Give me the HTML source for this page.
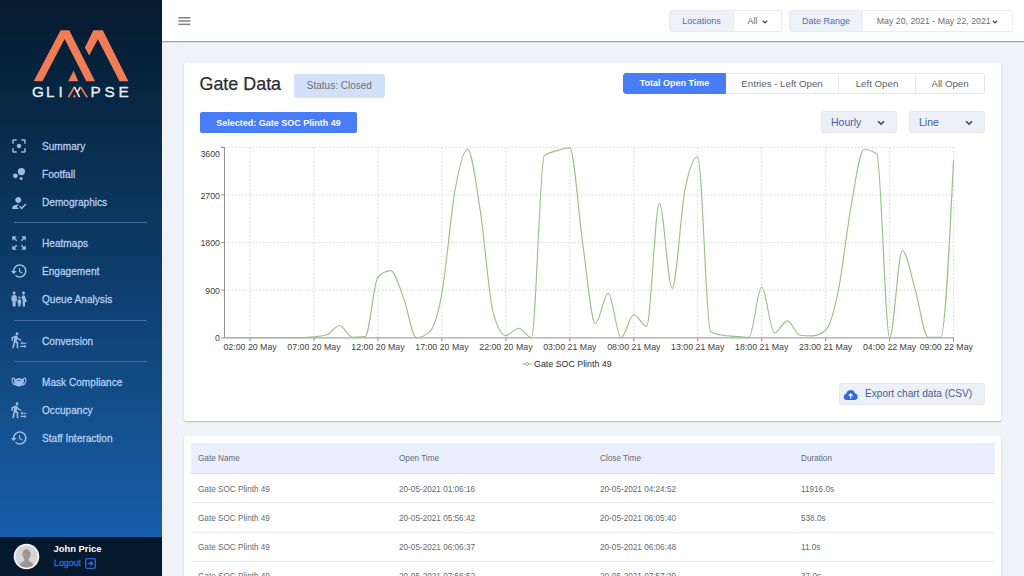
<!DOCTYPE html>
<html lang="en">
<head>
<meta charset="utf-8">
<title>Glimpse - Gate Data</title>
<style>
*{box-sizing:border-box;margin:0;padding:0}
html,body{width:1024px;height:576px;overflow:hidden}
body{font-family:"Liberation Sans",Arial,sans-serif;background:#f1f2f8;color:#333;position:relative}
.abs{position:absolute}
#sidebar{position:absolute;z-index:2;left:0;top:0;width:161.5px;height:576px;background:linear-gradient(180deg,#051b30 0px,#072947 115px,#0b365d 210px,#0e4174 310px,#14518e 425px,#175ca8 525px,#185eab 540px)}
#userstrip{position:absolute;left:0;top:536.5px;width:161.5px;height:40px;background:#04192e}
.nav{position:absolute;left:42px;color:#b4cdf0;font-size:10.800px;transform:scaleX(0.936);transform-origin:0 50%;-webkit-text-stroke:0.300px #b4cdf0;line-height:14px;white-space:nowrap;font-weight:400}
.navic{position:absolute;left:10px;width:18px;height:18px;fill:#9fbbe2}
.divider{position:absolute;left:14px;width:133px;height:1px;background:#3d6aa3}
#topbar{position:absolute;left:160px;top:0;width:864px;height:43px;background:#fff;border-bottom:1px solid #d9dadf}
#topbar:after{content:"";position:absolute;left:0;right:0;top:41px;height:1px;background:#a9aaaf}
.card{position:absolute;background:#fff;border-radius:2px;box-shadow:0 1px 1.5px rgba(30,30,40,.26)}
.pill{position:absolute;top:10px;height:21.500px;font-size:9px;line-height:21px;text-align:center;white-space:nowrap}
.pill.lab{background:#eef1f8;border:1px solid #e9ecf3;color:#4a6fb5;border-radius:3px 0 0 3px}
.pill.val{background:#fff;border:1px solid #eaecf2;border-left:none;color:#6a6d75;border-radius:0 3px 3px 0}
.tab{position:absolute;top:73px;height:21px;font-size:9.700px;line-height:19.500px;text-align:center;color:#5d6068;background:#fff;border:1px solid #e6e8ee;border-left:none;white-space:nowrap}
.tab.act{background:#497df8;color:#fff;font-weight:700;border-color:#497df8;border-radius:3px 0 0 3px;font-size:9px}
.sel{position:absolute;top:111px;height:22px;background:#edf0f7;border:1px solid #e4e7ef;border-radius:3px;color:#3f5fa3;font-size:10.5px;line-height:20px;padding-left:9px}
.sel svg{position:absolute;right:11.500px;top:8px}
.th,.td{position:absolute;font-size:8.200px;color:#666a72;white-space:nowrap;line-height:10px}
.rowline{position:absolute;left:190.500px;width:804.200px;height:1px;background:#e6e8ee}
svg text{font-family:"Liberation Sans",Arial,sans-serif}
</style>
</head>
<body>

<!-- SIDEBAR -->
<div id="sidebar">
  <!-- logo -->
  <svg class="abs" style="left:0;top:0" width="161" height="110" viewBox="0 0 161 110" role="img" aria-label="GLIMPSE"><title>GLIMPSE</title>
    <g fill="#f47c54">
      <polygon points="33.7,81.3 60.6,30.2 69.2,30.2 95.1,81.3 86.3,81.3 64.6,39 42.5,81.3"/>
      <polygon points="84.9,47.4 93.4,30.2 102.8,30.2 128.4,81.3 119.5,81.3 97.9,39.3 89.2,55.6"/>
      <polygon points="68.1,81.3 73.7,70.4 78.2,81.3"/>
    </g>
    <text y="97.2" x="32.0 45.9 58.6" font-size="15.3" fill="#e6ebf3" stroke="#e6ebf3" stroke-width="0.35">GLI</text>
    <text y="97.2" x="90.6 104.6 118.5" font-size="15.3" fill="#e6ebf3" stroke="#e6ebf3" stroke-width="0.35">PSE</text>
    <g fill="none" stroke-width="1.7" stroke-linecap="butt">
      <path d="M68.4,97.2 L74.4,86.9" stroke="#f47c54"/>
      <path d="M74.4,86.9 L79.6,97.2 M77.0,92.8 L80.5,86.9" stroke="#f0d9d0"/>
      <path d="M80.5,86.9 L87.2,97.2" stroke="#f47c54"/>
    </g>
    <polygon points="72.8,97.2 74.4,94.2 76.0,97.2" fill="#f47c54"/>
  </svg>

  <div class="nav" style="top:139.0px">Summary</div>
  <div class="nav" style="top:167.0px">Footfall</div>
  <div class="nav" style="top:195.0px">Demographics</div>
  <div class="divider" style="top:222.3px"></div>
  <div class="nav" style="top:236.3px">Heatmaps</div>
  <div class="nav" style="top:264.3px">Engagement</div>
  <div class="nav" style="top:292.3px">Queue Analysis</div>
  <div class="divider" style="top:320px"></div>
  <div class="nav" style="top:333.6px">Conversion</div>
  <div class="divider" style="top:360.5px"></div>
  <div class="nav" style="top:374.9px">Mask Compliance</div>
  <div class="nav" style="top:402.9px">Occupancy</div>
  <div class="nav" style="top:430.9px">Staff Interaction</div>

  <svg class="navic" style="top:136.7px" viewBox="0 0 24 24"><path d="M5 15H3v4c0 1.1.9 2 2 2h4v-2H5v-4zM5 5h4V3H5c-1.1 0-2 .9-2 2v4h2V5zm14-2h-4v2h4v4h2V5c0-1.1-.9-2-2-2zm0 16h-4v2h4c1.1 0 2-.9 2-2v-4h-2v4zM12 9c-1.66 0-3 1.34-3 3s1.34 3 3 3 3-1.34 3-3-1.34-3-3-3z"/></svg>
  <svg class="navic" style="top:164.6px" viewBox="0 0 24 24"><circle cx="7.2" cy="14.4" r="3.2"/><circle cx="14.8" cy="18" r="2"/><circle cx="15.2" cy="8.800" r="4.800"/></svg>
  <svg class="navic" style="top:193.5px" viewBox="0 0 24 24"><path d="M11 12c2.21 0 4-1.79 4-4s-1.79-4-4-4-4 1.79-4 4 1.79 4 4 4zm0 2c-2.67 0-8 1.34-8 4v2h9l-3-3 3-2.9c-.37-.07-.7-.1-1-.1zM15.47 20.5L12 17l1.4-1.41 2.07 2.08 5.13-5.17 1.4 1.41-6.53 6.59z"/></svg>
  <svg class="navic" style="top:234.2px" viewBox="0 0 24 24"><path d="M15 3l2.3 2.3-2.89 2.87 1.42 1.42L18.7 6.7 21 9V3zM3 9l2.3-2.3 2.87 2.89 1.42-1.42L6.7 5.3 9 3H3zm6 12l-2.3-2.3 2.89-2.87-1.42-1.42L5.3 17.3 3 15v6zm12-6l-2.3 2.3-2.87-2.89-1.42 1.42 2.89 2.87L15 21h6z"/></svg>
  <svg class="navic" style="top:262.2px" viewBox="0 0 24 24"><path d="M13 3c-4.97 0-9 4.03-9 9H1l3.89 3.89.07.14L9 12H6c0-3.87 3.13-7 7-7s7 3.13 7 7-3.13 7-7 7c-1.93 0-3.68-.79-4.94-2.06l-1.42 1.42C8.27 19.99 10.51 21 13 21c4.97 0 9-4.03 9-9s-4.03-9-9-9zm-1 5v5l4.28 2.54.72-1.21-3.5-2.08V8H12z"/></svg>
  <svg class="navic" style="top:290.3px" viewBox="0 0 24 24"><path d="M16 4c0-1.11.89-2 2-2s2 .89 2 2-.89 2-2 2-2-.89-2-2zm4 18v-6h2.5l-2.54-7.63C19.68 7.55 18.92 7 18.06 7h-.12c-.86 0-1.63.55-1.9 1.370l-.86 2.580c1.080.6 1.820 1.730 1.820 3.050v8h3zm-7.5-10.5c.83 0 1.5-.67 1.5-1.5s-.67-1.5-1.5-1.5S11 9.170 11 10s.67 1.5 1.5 1.5zM5.5 6c1.110 0 2-.89 2-2s-.89-2-2-2-2 .89-2 2 .89 2 2 2zm2 16v-7H9V9c0-1.100-.9-2-2-2H4c-1.100 0-2 .9-2 2v6h1.5v7h4zm6.500 0v-4h1v-4c0-.82-.68-1.5-1.5-1.5h-2c-.82 0-1.5.68-1.5 1.500v4h1v4h3z"/></svg>
  <svg class="navic" style="top:331.4px" viewBox="0 0 24 24"><path d="M16.49 15.5v-1.750L14 16.250l2.490 2.500V17H22v-1.500h-5.510zm3.020 4.250H14v1.500h5.510V23L22 20.500 19.510 18v1.750zM9.500 5.500c1.100 0 2-.9 2-2s-.9-2-2-2-2 .9-2 2 .9 2 2 2zM5.750 8.900L3 23h2.100l1.750-8L9 17v6h2v-7.550L8.950 13.400l.6-3C10.850 12 12.800 13 15 13v-2c-1.850 0-3.450-1-4.350-2.450l-.95-1.600C9.350 6.350 8.700 6 8 6c-.25 0-.5.050-.75.150L2 8.300V13h2V9.650l1.750-.75"/></svg>
  <svg class="navic" style="top:372.8px" viewBox="0 0 24 24"><path d="M19.500 6c-1.310 0-2.370 1.010-2.480 2.300C15.140 7.800 14.180 6.500 12 6.500c-2.190 0-3.140 1.300-5.020 1.800C6.870 7.020 5.810 6 4.500 6 3.120 6 2 7.120 2 8.500V9c0 6 3.600 7.810 6.520 7.980C9.530 17.620 10.720 18 12 18s2.470-.38 3.480-1.020C18.400 16.810 22 15 22 9v-.5C22 7.120 20.880 6 19.500 6zM3.500 9v-.5c0-.55.45-1 1-1s1 .45 1 1v3c0 1.280.38 2.470 1.010 3.480C4.990 14.270 3.500 12.650 3.500 9zm17 0c0 3.650-1.490 5.270-3.010 5.980.64-1.010 1.010-2.200 1.010-3.480v-3c0-.55.45-1 1-1s1 .45 1 1V9zm-9.810 1.480c-.44.26-.96.56-1.690.76V10.200c.48-.17.84-.38 1.180-.58C10.720 9.300 11.230 9 12 9s1.270.3 1.800.62c.34.2.71.42 1.200.59v1.040c-.75-.21-1.260-.51-1.710-.78-.46-.27-.8-.47-1.290-.47s-.84.2-1.310.48z"/></svg>
  <svg class="navic" style="top:400.8px" viewBox="0 0 24 24"><path d="M16.49 15.5v-1.750L14 16.250l2.490 2.500V17H22v-1.500h-5.510zm3.020 4.250H14v1.500h5.510V23L22 20.500 19.510 18v1.750zM9.500 5.500c1.100 0 2-.9 2-2s-.9-2-2-2-2 .9-2 2 .9 2 2 2zM5.750 8.900L3 23h2.100l1.750-8L9 17v6h2v-7.550L8.950 13.400l.6-3C10.850 12 12.800 13 15 13v-2c-1.850 0-3.450-1-4.350-2.450l-.95-1.600C9.350 6.350 8.700 6 8 6c-.25 0-.5.050-.75.150L2 8.300V13h2V9.650l1.750-.75"/></svg>
  <svg class="navic" style="top:429.3px" viewBox="0 0 24 24"><path d="M13 3c-4.97 0-9 4.03-9 9H1l3.89 3.89.07.14L9 12H6c0-3.87 3.13-7 7-7s7 3.13 7 7-3.13 7-7 7c-1.93 0-3.68-.79-4.94-2.06l-1.42 1.42C8.27 19.99 10.51 21 13 21c4.97 0 9-4.03 9-9s-4.03-9-9-9zm-1 5v5l4.28 2.54.72-1.21-3.5-2.08V8H12z"/></svg>

  <div id="userstrip">
    <svg class="abs" style="left:13px;top:6px" width="27" height="27" viewBox="0 0 27 27">
      <defs><clipPath id="av"><circle cx="13.5" cy="13.5" r="11"/></clipPath></defs>
      <circle cx="13.5" cy="13.5" r="12.8" fill="#f4f2f2"/>
      <circle cx="13.5" cy="13.5" r="11" fill="#d8d4d3"/>
      <g clip-path="url(#av)" fill="#9c9695">
        <ellipse cx="13.5" cy="11.2" rx="4.1" ry="4.9"/>
        <path d="M5.5 27C5.5 20.5 9 18.6 11.2 18.2L13.5 17.6L15.800 18.2C18 18.6 21.500 20.500 21.500 27Z"/>
        <rect x="11.4" y="14.500" width="4.200" height="5"/>
      </g>
    </svg>
    <div class="abs" style="left:53.500px;top:6.300px;color:#fff;font-weight:700;font-size:9.400px;line-height:12px;white-space:nowrap">John Price</div>
    <div class="abs" style="left:54px;top:21.500px;color:#2f68d6;font-size:8.800px;line-height:11px;white-space:nowrap;-webkit-text-stroke:0.35px #2f68d6">Logout</div>
    <svg class="abs" style="left:85px;top:21.500px" width="11" height="11" viewBox="0 0 11 11">
      <rect x="0.700" y="0.700" width="9.600" height="9.600" rx="1" fill="none" stroke="#2f68d6" stroke-width="1.300"/>
      <path d="M2.500 5.500H7.200M5.400 3.300L7.600 5.500L5.400 7.700" fill="none" stroke="#2f68d6" stroke-width="1.300"/>
    </svg>
  </div>
</div>

<!-- TOPBAR -->
<div id="topbar"></div>
<svg class="abs" style="left:178px;top:16px" width="14" height="10" viewBox="0 0 14 10">
  <g stroke="#808289" stroke-width="1.5"><line x1="0.300" y1="1.750" x2="12.400" y2="1.750"/><line x1="0.300" y1="5.050" x2="12.400" y2="5.050"/><line x1="0.300" y1="8.350" x2="12.400" y2="8.350"/></g>
</svg>
<div class="pill lab" style="left:669px;width:65px">Locations</div>
<div class="pill val" style="left:734px;width:48px">All <svg width="6" height="4" viewBox="0 0 6 4" style="margin-left:1.5px;vertical-align:0.5px"><path d="M0.800 0.700L3 2.900L5.200 0.700" fill="none" stroke="#444a55" stroke-width="1.300"/></svg></div>
<div class="pill lab" style="left:789px;width:74px">Date Range</div>
<div class="pill val" style="left:863px;width:150px"><span style="font-size:8.750px">May 20, 2021 - May 22, 2021</span><svg width="6" height="4" viewBox="0 0 6 4" style="margin-left:1.5px;vertical-align:0.5px"><path d="M0.800 0.700L3 2.900L5.200 0.700" fill="none" stroke="#444a55" stroke-width="1.300"/></svg></div>

<!-- CARD 1 -->
<div class="card" style="left:184px;top:63px;width:816.600px;height:357.600px"></div>
<div class="abs" style="left:199.500px;top:73.300px;font-size:17.900px;line-height:22px;color:#2b2d32;-webkit-text-stroke:0.25px #2b2d32;white-space:nowrap">Gate Data</div>
<div class="abs" style="left:294px;top:74.400px;width:90.700px;height:23.600px;background:#d3e0f9;border-radius:3px;color:#6a7180;font-size:10px;line-height:24.600px;text-align:center">Status: Closed</div>
<div class="abs" style="left:200px;top:112px;width:157px;height:21px;background:#497df8;border-radius:2px;color:#fff;font-weight:700;font-size:9px;line-height:22px;text-align:center;white-space:nowrap">Selected: Gate SOC Plinth 49</div>

<div class="tab act" style="left:623px;width:103px;border-left:1px solid #497df8">Total Open Time</div>
<div class="tab" style="left:726px;width:113px">Entries - Left Open</div>
<div class="tab" style="left:839px;width:77px">Left Open</div>
<div class="tab" style="left:916px;width:69px;border-radius:0 3px 3px 0">All Open</div>

<div class="sel" style="left:821px;width:76px">Hourly<svg width="8" height="6" viewBox="0 0 8 6"><path d="M1 1.2L4 4.2L7 1.2" fill="none" stroke="#3a4150" stroke-width="1.5"/></svg></div>
<div class="sel" style="left:909px;width:76px">Line<svg width="8" height="6" viewBox="0 0 8 6"><path d="M1 1.2L4 4.2L7 1.2" fill="none" stroke="#3a4150" stroke-width="1.5"/></svg></div>

<!-- CHART -->
<svg class="abs" style="left:0;top:0" width="1024" height="576" viewBox="0 0 1024 576">
  <g stroke="#d6d8dd" stroke-width="1" stroke-dasharray="1.5 2" fill="none"><line x1="250.1" y1="147.4" x2="250.1" y2="337.7"/><line x1="314.0" y1="147.4" x2="314.0" y2="337.7"/><line x1="378.0" y1="147.4" x2="378.0" y2="337.7"/><line x1="441.9" y1="147.4" x2="441.9" y2="337.7"/><line x1="505.9" y1="147.4" x2="505.9" y2="337.7"/><line x1="569.8" y1="147.4" x2="569.8" y2="337.7"/><line x1="633.8" y1="147.4" x2="633.8" y2="337.7"/><line x1="697.7" y1="147.4" x2="697.7" y2="337.7"/><line x1="761.7" y1="147.4" x2="761.7" y2="337.7"/><line x1="825.6" y1="147.4" x2="825.6" y2="337.7"/><line x1="889.6" y1="147.4" x2="889.6" y2="337.7"/><line x1="953.5" y1="147.4" x2="953.5" y2="337.7"/><line x1="224.500" y1="147.4" x2="953.500" y2="147.4"/><line x1="224.500" y1="195.0" x2="953.500" y2="195.0"/><line x1="224.500" y1="242.6" x2="953.500" y2="242.6"/><line x1="224.500" y1="290.1" x2="953.500" y2="290.1"/></g>
  <g stroke="#909298" stroke-width="1" fill="none">
    <path d="M221,147.400H224.500V337.900H953.500V341.300"/>
    <line x1="250.1" y1="337.9" x2="250.1" y2="341.300"/><line x1="314.0" y1="337.9" x2="314.0" y2="341.300"/><line x1="378.0" y1="337.9" x2="378.0" y2="341.300"/><line x1="441.9" y1="337.9" x2="441.9" y2="341.300"/><line x1="505.9" y1="337.9" x2="505.9" y2="341.300"/><line x1="569.8" y1="337.9" x2="569.8" y2="341.300"/><line x1="633.8" y1="337.9" x2="633.8" y2="341.300"/><line x1="697.7" y1="337.9" x2="697.7" y2="341.300"/><line x1="761.7" y1="337.9" x2="761.7" y2="341.300"/><line x1="825.6" y1="337.9" x2="825.6" y2="341.300"/><line x1="889.6" y1="337.9" x2="889.6" y2="341.300"/><line x1="953.5" y1="337.9" x2="953.5" y2="341.300"/><line x1="221" y1="147.4" x2="224.5" y2="147.4"/><line x1="221" y1="195.0" x2="224.5" y2="195.0"/><line x1="221" y1="242.6" x2="224.5" y2="242.6"/><line x1="221" y1="290.1" x2="224.5" y2="290.1"/><line x1="221" y1="337.9" x2="224.5" y2="337.9"/>
  </g>
  <g font-size="8.8" fill="#3c3f45"><text x="250.1" y="349.600" text-anchor="middle">02:00 20 May</text><text x="314.0" y="349.600" text-anchor="middle">07:00 20 May</text><text x="378.0" y="349.600" text-anchor="middle">12:00 20 May</text><text x="441.9" y="349.600" text-anchor="middle">17:00 20 May</text><text x="505.9" y="349.600" text-anchor="middle">22:00 20 May</text><text x="569.8" y="349.600" text-anchor="middle">03:00 21 May</text><text x="633.8" y="349.600" text-anchor="middle">08:00 21 May</text><text x="697.7" y="349.600" text-anchor="middle">13:00 21 May</text><text x="761.7" y="349.600" text-anchor="middle">18:00 21 May</text><text x="825.6" y="349.600" text-anchor="middle">23:00 21 May</text><text x="889.6" y="349.600" text-anchor="middle">04:00 22 May</text><text x="973" y="349.600" text-anchor="end">09:00 22 May</text><text x="220" y="157.2" text-anchor="end">3600</text><text x="220" y="198.8" text-anchor="end">2700</text><text x="220" y="246.3" text-anchor="end">1800</text><text x="220" y="293.8" text-anchor="end">900</text><text x="220" y="341.3" text-anchor="end">0</text></g>
  <path d="M224.5,337.7C228.8,337.7,233.0,337.7,237.3,337.7C241.6,337.7,245.8,337.7,250.1,337.7C254.3,337.7,258.6,337.7,262.9,337.7C267.1,337.7,271.4,337.7,275.7,337.7C279.9,337.7,284.2,337.7,288.4,337.7C292.7,337.7,297.0,337.7,301.2,337.7C305.5,337.7,309.8,337.4,314.0,336.9C318.3,336.4,322.6,336.2,326.8,334.8C331.1,333.4,335.3,325.5,339.6,325.5C343.9,325.5,348.1,337.2,352.4,337.2C356.7,337.2,360.9,337.0,365.2,336.6C369.5,336.3,373.7,281.3,378.0,277.0C382.2,272.7,386.5,270.6,390.8,270.6C395.0,270.6,399.3,286.9,403.6,298.1C407.8,309.2,412.1,337.7,416.4,337.7C420.6,337.7,424.9,335.9,429.1,332.4C433.4,328.9,437.7,316.6,441.9,293.3C446.2,269.9,450.5,216.4,454.7,192.3C459.0,168.3,463.2,149.0,467.5,149.0C471.8,149.0,476.0,183.6,480.3,210.8C484.6,238.1,488.8,296.8,493.1,312.3C497.4,327.8,501.6,335.6,505.9,335.6C510.1,335.6,514.4,328.2,518.7,328.2C522.9,328.2,527.2,337.7,531.5,337.7C535.7,337.7,540.0,159.4,544.2,155.9C548.5,152.3,552.8,151.9,557.0,150.6C561.3,149.3,565.6,147.9,569.8,147.9C574.1,147.9,578.4,213.3,582.6,242.6C586.9,271.8,591.1,323.4,595.4,323.4C599.7,323.4,603.9,293.3,608.2,293.3C612.5,293.3,616.7,337.7,621.0,337.7C625.3,337.7,629.5,314.7,633.8,314.7C638.0,314.7,642.3,326.3,646.6,326.3C650.8,326.3,655.1,203.2,659.4,203.2C663.6,203.2,667.9,288.3,672.1,288.3C676.4,288.3,680.7,212.2,684.9,190.2C689.2,168.3,693.5,156.7,697.7,156.7C702.0,156.7,706.3,328.7,710.5,331.4C714.8,334.0,719.0,334.6,723.3,335.3C727.6,336.0,731.8,336.0,736.1,336.4C740.4,336.7,744.6,337.4,748.9,337.4C753.2,337.4,757.4,287.0,761.7,287.0C765.9,287.0,770.2,332.9,774.5,332.9C778.7,332.9,783.0,320.8,787.3,320.8C791.5,320.8,795.8,335.0,800.0,335.3C804.3,335.7,808.6,335.8,812.8,335.8C817.1,335.8,821.4,334.0,825.6,330.3C829.9,326.6,834.2,310.9,838.4,290.1C842.7,269.3,846.9,229.0,851.2,205.5C855.5,182.1,859.7,149.5,864.0,149.5C868.3,149.5,872.5,151.0,876.8,154.0C881.1,157.0,885.3,337.7,889.6,337.7C893.8,337.7,898.1,250.5,902.4,250.5C906.6,250.5,910.9,274.9,915.2,289.3C919.4,303.8,923.7,336.9,927.9,337.1C932.2,337.2,936.5,337.3,940.7,337.3C945.0,337.3,949.3,248.7,953.5,160.1" fill="none" stroke="#9bc08d" stroke-width="1.15" stroke-linejoin="round"/>
  <!-- legend -->
  <line x1="522.500" y1="364" x2="531.600" y2="364" stroke="#7fb86a" stroke-width="1"/>
  <circle cx="527" cy="364" r="1.500" fill="#fff" stroke="#7fb86a" stroke-width="0.900"/>
  <text x="534" y="366.900" font-size="8.850" fill="#2a2c30">Gate SOC Plinth 49</text>
</svg>

<!-- export button -->
<div class="abs" style="left:839px;top:383px;width:146px;height:22px;background:#edf0f7;border:1px solid #e4e7f0;border-radius:3px"></div>
<svg class="abs" style="left:843.300px;top:388.600px" width="15.400" height="11" viewBox="0 0 14 10" preserveAspectRatio="none">
  <path d="M3.4 10.2A3 3 0 0 1 2.9 4.3A4.1 4.1 0 0 1 10.8 3.8A3.25 3.25 0 0 1 10.6 10.2Z" fill="#2e6be0"/>
  <path d="M7 8.6V4.6M5.2 6.2L7 4.4L8.8 6.2" stroke="#fff" stroke-width="1.1" fill="none"/>
</svg>
<div class="abs" style="left:865px;top:388px;font-size:10.100px;line-height:12px;color:#3f5fa3;white-space:nowrap">Export chart data (CSV)</div>

<!-- CARD 2 -->
<div class="card" style="left:184px;top:436.300px;width:816.600px;height:160px"></div>
<div class="abs" style="left:190.500px;top:442.500px;width:804.200px;height:31px;background:#e9effd;border-bottom:1px solid #d6dae4"></div>
<div class="th" style="left:198px;top:454px">Gate Name</div>
<div class="th" style="left:399px;top:454px">Open Time</div>
<div class="th" style="left:600px;top:454px">Close Time</div>
<div class="th" style="left:801px;top:454px">Duration</div>

<div class="td" style="left:198px;top:485px">Gate SOC Plinth 49</div>
<div class="td" style="left:399px;top:485px">20-05-2021 01:06:16</div>
<div class="td" style="left:600px;top:485px">20-05-2021 04:24:52</div>
<div class="td" style="left:801px;top:485px">11916.0s</div>
<div class="rowline" style="top:502px"></div>

<div class="td" style="left:198px;top:513.500px">Gate SOC Plinth 49</div>
<div class="td" style="left:399px;top:513.500px">20-05-2021 05:56:42</div>
<div class="td" style="left:600px;top:513.500px">20-05-2021 06:05:40</div>
<div class="td" style="left:801px;top:513.500px">538.0s</div>
<div class="rowline" style="top:532px"></div>

<div class="td" style="left:198px;top:542.800px">Gate SOC Plinth 49</div>
<div class="td" style="left:399px;top:542.800px">20-05-2021 06:06:37</div>
<div class="td" style="left:600px;top:542.800px">20-05-2021 06:06:48</div>
<div class="td" style="left:801px;top:542.800px">11.0s</div>
<div class="rowline" style="top:561px"></div>

<div class="td" style="left:198px;top:572px">Gate SOC Plinth 49</div>
<div class="td" style="left:399px;top:572px">20-05-2021 07:56:52</div>
<div class="td" style="left:600px;top:572px">20-05-2021 07:57:29</div>
<div class="td" style="left:801px;top:572px">37.0s</div>

</body>
</html>
